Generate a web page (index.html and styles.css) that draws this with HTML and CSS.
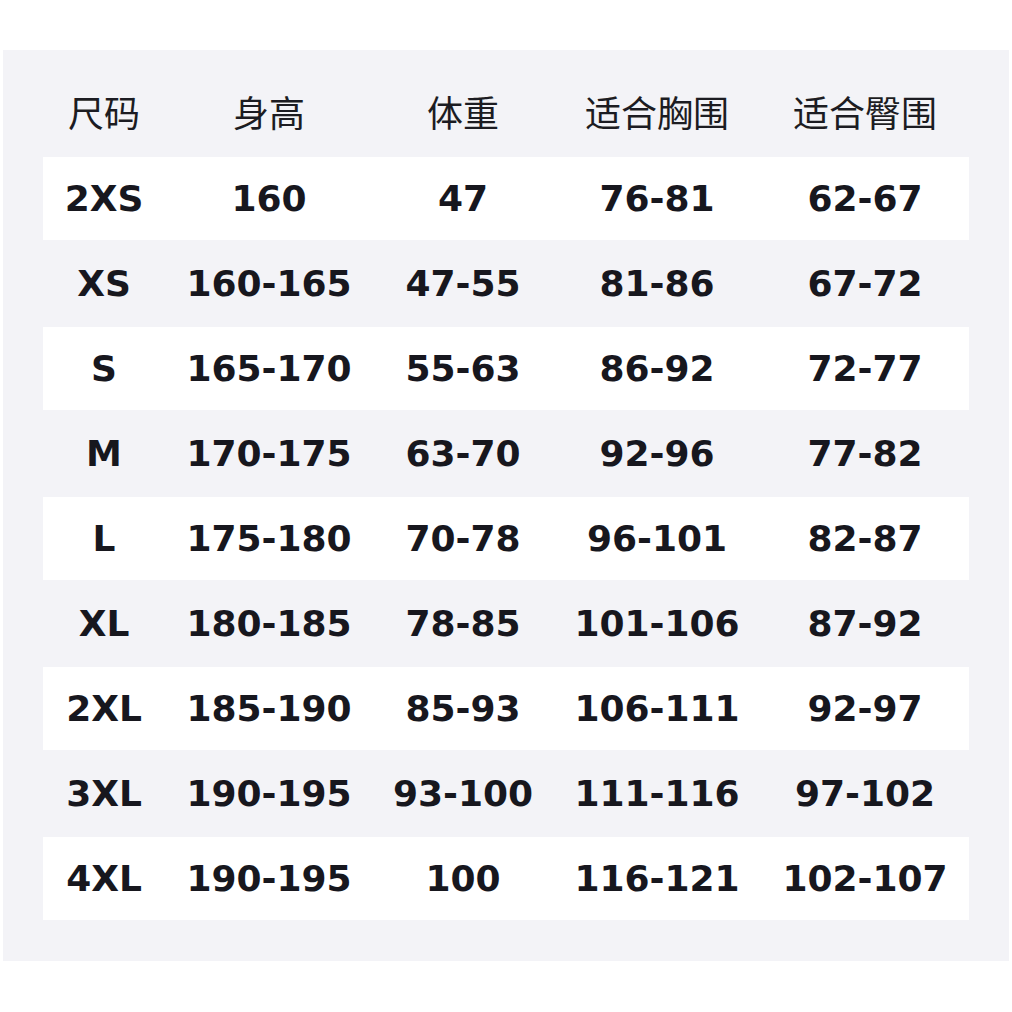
FILE: index.html
```html
<!DOCTYPE html>
<html lang="zh">
<head>
<meta charset="utf-8">
<link rel="stylesheet" href="styles.css">
</head>
<body>
<div class="panel">
  <div class="row head">
    <div>尺码</div><div>身高</div><div>体重</div><div>适合胸围</div><div>适合臀围</div>
  </div>
  <div class="row w"><div>2XS</div><div>160</div><div>47</div><div>76-81</div><div>62-67</div></div>
  <div class="row g"><div>XS</div><div>160-165</div><div>47-55</div><div>81-86</div><div>67-72</div></div>
  <div class="row w"><div>S</div><div>165-170</div><div>55-63</div><div>86-92</div><div>72-77</div></div>
  <div class="row g"><div>M</div><div>170-175</div><div>63-70</div><div>92-96</div><div>77-82</div></div>
  <div class="row w"><div>L</div><div>175-180</div><div>70-78</div><div>96-101</div><div>82-87</div></div>
  <div class="row g"><div>XL</div><div>180-185</div><div>78-85</div><div>101-106</div><div>87-92</div></div>
  <div class="row w"><div>2XL</div><div>185-190</div><div>85-93</div><div>106-111</div><div>92-97</div></div>
  <div class="row g"><div>3XL</div><div>190-195</div><div>93-100</div><div>111-116</div><div>97-102</div></div>
  <div class="row w"><div>4XL</div><div>190-195</div><div>100</div><div>116-121</div><div>102-107</div></div>
</div>
</body>
</html>
```
FILE: styles.css
```css
html, body {
  margin: 0;
  padding: 0;
  background: #ffffff;
}
body {
  padding-top: 50px;
  padding-left: 3px;
}
.panel {
  width: 926px;
  height: 870px;
  padding: 0 40px 41px 40px;
  background: #f3f3f7;
  color: #17171e;
}
.row {
  display: grid;
  grid-template-columns: 122px 208px 180px 208px 208px;
  align-items: center;
  justify-items: center;
  font-family: "DejaVu Sans", "Noto Sans CJK SC", sans-serif;
  font-weight: bold;
  font-size: 36px;
  line-height: 1;
}
.row.w {
  height: 83px;
  background: #ffffff;
}
.row.g {
  height: 87px;
}
.row.head {
  height: 92px;
  padding-top: 15px;
  font-family: "Noto Sans CJK SC", sans-serif;
  font-weight: normal;
  color: #1c1c22;
}
```
